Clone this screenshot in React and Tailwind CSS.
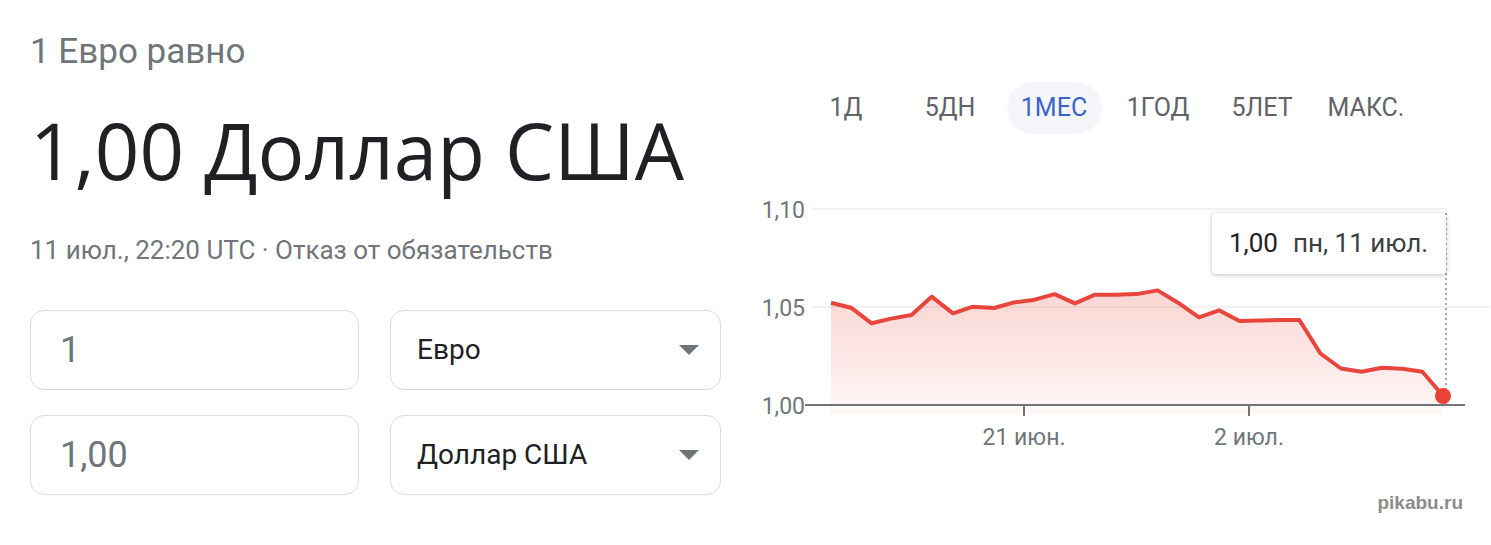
import { ChevronDown } from 'lucide-react';

const tabs = ['1Д', '5ДН', '1МЕС', '1ГОД', '5ЛЕТ', 'МАКС.'];

// точки графика в координатах страницы
const points = [
  [831, 302.7], [851, 307.7], [871.7, 323.3], [891, 318.6], [911.5, 315], [931.6, 296.7],
  [953, 313.3], [973, 306.7], [994, 308], [1014, 302.4], [1033, 300.1], [1054.6, 294.1],
  [1075, 303.4], [1095, 294.7], [1116, 294.7], [1136.5, 294.1], [1157.6, 290.4], [1178, 302.7],
  [1199, 317.3], [1219, 310.3], [1239.5, 321], [1259.6, 320.6], [1280, 320], [1299.4, 320],
  [1320.4, 353.5], [1341, 368.5], [1361.6, 371.8], [1381.7, 367.8], [1402.3, 368.8],
  [1422.4, 371.8], [1443, 395.7],
];

function Field({ value }) {
  return (
    <div className="w-[329px] h-[80px] border border-[#dadce0] rounded-[14px] flex items-center pl-[29px] text-[36px] text-[#70757a]">
      {value}
    </div>
  );
}

function Select({ label }) {
  return (
    <div className="w-[331px] h-[80px] border border-[#dadce0] rounded-[14px] flex items-center justify-between pl-[26px] pr-[21px] text-[28px] text-[#202124]">
      <span>{label}</span>
      <span className="w-0 h-0 border-l-[10px] border-r-[10px] border-t-[10px] border-l-transparent border-r-transparent border-t-[#70757a]" />
    </div>
  );
}

function Chart() {
  const line = points.map((p) => p.join(',')).join(' ');
  const area = `831,415 ${line} 1443,415`;

  return (
    <div className="relative mt-[56px]">
      <svg width="751" height="270" viewBox="740 190 751 270" className="block">
        <defs>
          <linearGradient id="fill" x1="0" y1="0" x2="0" y2="1">
            <stop offset="0" stopColor="#ea4335" stopOpacity="0.22" />
            <stop offset="1" stopColor="#ea4335" stopOpacity="0.04" />
          </linearGradient>
        </defs>
        <line x1="812" y1="209" x2="1447" y2="209" stroke="#ececec" strokeWidth="1.5" />
        <line x1="812" y1="307" x2="1490" y2="307" stroke="#ececec" strokeWidth="1.5" />
        <polygon points={area} fill="url(#fill)" />
        <line x1="805" y1="405" x2="1465" y2="405" stroke="#70757a" strokeWidth="2" />
        <line x1="1024" y1="405" x2="1024" y2="416" stroke="#70757a" strokeWidth="2" />
        <line x1="1249" y1="405" x2="1249" y2="416" stroke="#70757a" strokeWidth="2" />
        <line x1="1446" y1="213" x2="1446" y2="405" stroke="#8a8a8a" strokeWidth="1.5" strokeDasharray="2 3" />
        <polyline points={line} fill="none" stroke="#e8453c" strokeWidth="4" strokeLinejoin="round" />
        <circle cx="1443" cy="396" r="8" fill="#ea4335" />
        <g fill="#70757a" fontFamily="Roboto, sans-serif" fontSize="23">
          <text x="805" y="218" textAnchor="end">1,10</text>
          <text x="805" y="316" textAnchor="end">1,05</text>
          <text x="805" y="414" textAnchor="end">1,00</text>
          <text x="1024" y="445" textAnchor="middle">21 июн.</text>
          <text x="1249" y="445" textAnchor="middle">2 июл.</text>
        </g>
      </svg>
      <div className="absolute left-[472px] top-[23px] w-[234px] h-[61px] bg-white rounded-[4px] shadow-[0_1px_5px_rgba(0,0,0,0.25)] flex items-center pl-[17px] gap-[15px]">
        <span className="text-[26px] text-[#202124]">1,00</span>
        <span className="text-[26px] text-[#3c4043]">пн, 11 июл.</span>
      </div>
    </div>
  );
}

export default function App() {
  return (
    <div className="relative w-[1491px] h-[545px] bg-white flex font-['Roboto',sans-serif]">
      <div className="w-[740px] pl-[30px] pt-[32px] flex flex-col">
        <div className="text-[35px] leading-[40px] text-[#70757a]">1 Евро равно</div>
        <div className="mt-[30px] text-[78px] leading-[96px] text-[#202124] font-['Open_Sans',sans-serif]">1,00 Доллар США</div>
        <div className="mt-[37px] text-[26px] leading-[30px] text-[#70757a]">11 июл., 22:20 UTC · Отказ от обязательств</div>
        <div className="mt-[45px] flex flex-col gap-[25px]">
          <div className="flex gap-[31px]">
            <Field value="1" />
            <Select label="Евро" />
          </div>
          <div className="flex gap-[31px]">
            <Field value="1,00" />
            <Select label="Доллар США" />
          </div>
        </div>
      </div>
      <div className="flex-1 pt-[82px] flex flex-col">
        <div className="ml-[54px] flex h-[52px]">
          {tabs.map((t) => (
            <div key={t} className="w-[104px] flex justify-center items-center">
              {t === '1МЕС' ? (
                <span className="w-[95px] h-[52px] rounded-full bg-[#f4f6fa] flex items-center justify-center text-[25px] text-[#3b64c8]">{t}</span>
              ) : (
                <span className="text-[25px] text-[#5f6368]">{t}</span>
              )}
            </div>
          ))}
        </div>
        <Chart />
      </div>
      <div className="absolute right-[28px] bottom-[28px] text-[19px] font-bold text-[#8c8c8c] font-['Liberation_Sans',sans-serif]">pikabu.ru</div>
    </div>
  );
}
